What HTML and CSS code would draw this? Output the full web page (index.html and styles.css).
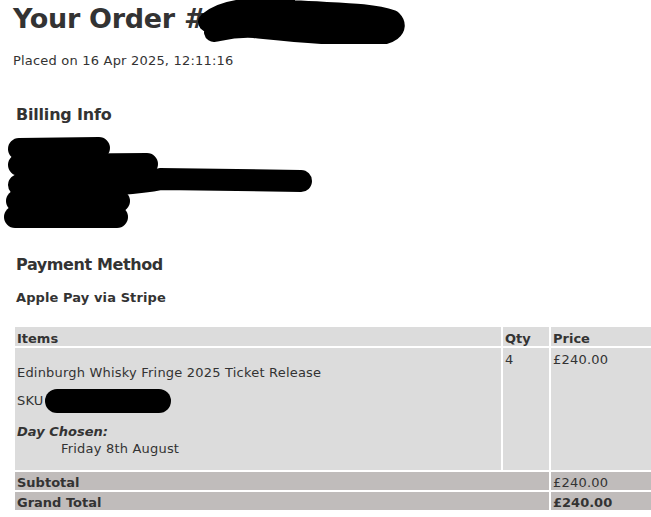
FILE: index.html
```html
<!DOCTYPE html>
<html lang="en">
<head>
<meta charset="utf-8">
<title>Your Order</title>
<link rel="stylesheet" href="styles.css">
</head>
<body>
<main class="page">
  <h1 class="title">Your Order #<svg class="redact-title" width="214" height="44" viewBox="0 0 214 44" aria-hidden="true"><path d="M14 22 C 30 8, 60 6, 100 10 C 140 13, 175 12, 198 20 C 206 28, 196 36, 176 36 C 136 36, 100 32, 60 28 C 40 27, 30 30, 20 32" fill="none" stroke="#000" stroke-width="20" stroke-linecap="round" stroke-linejoin="round"/><path d="M20 20 L 190 24" stroke="#000" stroke-width="22" stroke-linecap="round"/></svg></h1>
  <p class="placed">Placed on 16 Apr 2025, 12:11:16</p>

  <h2 class="section-title">Billing Info</h2>
  <svg class="redact-billing" width="320" height="96" viewBox="0 0 320 96" aria-hidden="true">
    <g fill="none" stroke="#000" stroke-linecap="round" stroke-width="22">
      <path d="M18 14 L 98 13"/>
      <path d="M18 30 L 146 29"/>
      <path d="M18 50 C 80 52, 130 50, 160 44 L 300 46"/>
      <path d="M16 66 L 118 66"/>
      <path d="M14 82 L 116 82"/>
    </g>
  </svg>

  <h2 class="section-title payment">Payment Method</h2>
  <p class="method">Apple Pay via Stripe</p>

  <table class="order-table">
    <thead>
      <tr>
        <th class="col-item">Items</th>
        <th class="col-qty">Qty</th>
        <th class="col-price">Price</th>
      </tr>
    </thead>
    <tbody>
      <tr class="item-row">
        <td class="col-item">
          <p class="item-name">Edinburgh Whisky Fringe 2025 Ticket Release</p>
          <p class="item-sku">SKU<span class="redact-sku"></span></p>
          <dl class="item-meta">
            <dt>Day Chosen:</dt>
            <dd>Friday 8th August</dd>
          </dl>
        </td>
        <td class="col-qty">4</td>
        <td class="col-price">£240.00</td>
      </tr>
    </tbody>
    <tfoot>
      <tr class="total-row">
        <th colspan="2">Subtotal</th>
        <td>£240.00</td>
      </tr>
      <tr class="total-row grand">
        <th colspan="2">Grand Total</th>
        <td>£240.00</td>
      </tr>
    </tfoot>
  </table>
</main>
</body>
</html>
```

FILE: styles.css
```css
html, body {
  margin: 0;
  padding: 0;
  background: #fff;
  overflow-x: hidden;
}
body {
  font-family: "DejaVu Sans", Verdana, sans-serif;
  color: #333;
  font-size: 13px;
  letter-spacing: 0.2px;
}
.page {
  padding: 0 0 0 13px;
}
.title {
  margin: 0;
  padding-top: 3px;
  font-size: 27px;
  line-height: 32px;
  font-weight: bold;
  letter-spacing: -0.3px;
  white-space: nowrap;
  height: 34px;
}
.redact-title {
  vertical-align: top;
  margin-left: -12px;
  margin-top: -3px;
}
.placed {
  margin: 16px 0 0 0;
  line-height: 16px;
}
.section-title {
  margin: 36px 0 0 3px;
  font-size: 16px;
  line-height: 20px;
  letter-spacing: -0.2px;
}
.redact-billing {
  display: block;
  margin: 10px 0 0 -12px;
}
.section-title.payment {
  margin-top: 24px;
  letter-spacing: -0.4px;
}
.method {
  margin: 15px 0 0 3px;
  font-weight: bold;
  line-height: 16px;
  letter-spacing: 0.1px;
}
.order-table {
  margin-top: 19px;
  border-collapse: separate;
  border-spacing: 2px;
  width: calc(100% + 2px);
  font-size: 13px;
}
.order-table th,
.order-table td {
  text-align: left;
  vertical-align: top;
  padding: 3px 2px 0;
  line-height: 15px;
}
.order-table th {
  letter-spacing: 0;
}
.order-table thead th {
  background: #dcdcdc;
  padding-top: 4px;
}
.order-table tbody td {
  background: #dcdcdc;
  padding-top: 4px;
}
.col-item { width: auto; }
.col-qty { width: 42px; }
.col-price { width: 96px; }
.item-row td {
  height: 115px;
}
.item-name {
  margin: 13px 0 0 0;
  line-height: 16px;
}
.item-sku {
  margin: 8px 0 0 0;
  line-height: 16px;
}
.redact-sku {
  display: inline-block;
  width: 126px;
  height: 24px;
  background: #000;
  border-radius: 12px;
  vertical-align: middle;
  margin-left: 1px;
}
.item-meta {
  margin: 10px 0 13px 0;
}
.item-meta dt {
  font-weight: bold;
  font-style: italic;
  line-height: 17px;
  letter-spacing: 0;
}
.item-meta dd {
  margin: 0 0 0 44px;
  line-height: 17px;
}
.total-row th,
.total-row td {
  background: #c0bcbb;
}
.total-row.grand td {
  font-weight: bold;
  letter-spacing: 0;
}
```
